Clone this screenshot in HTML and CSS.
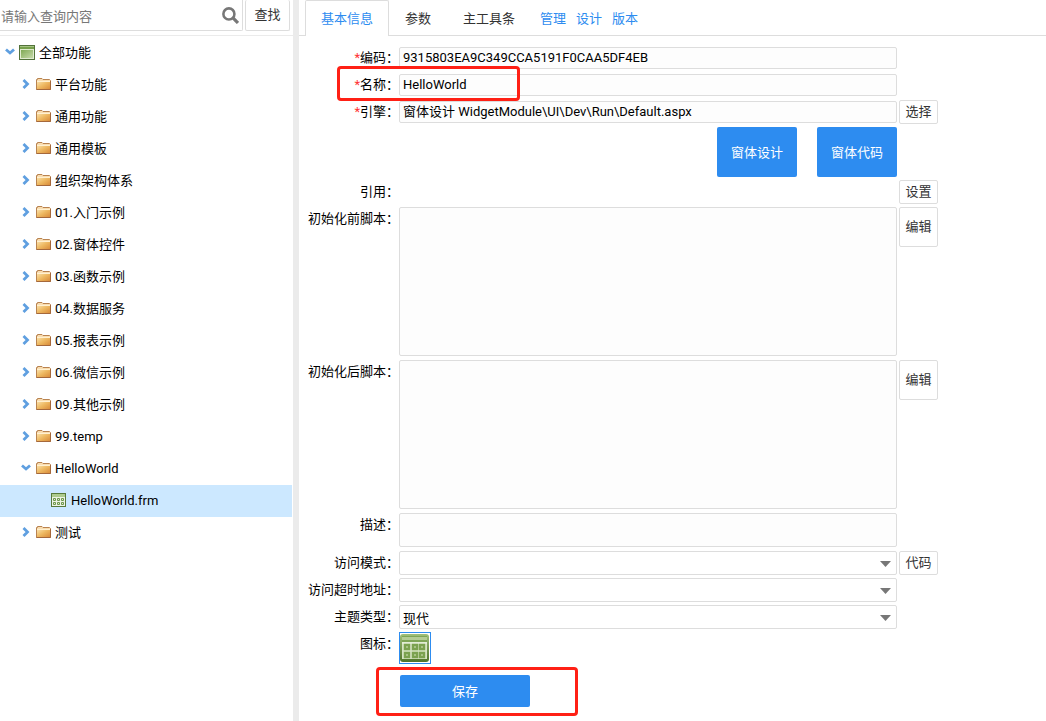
FILE: index.html
```html
<!DOCTYPE html>
<html lang="zh-CN">
<head>
<meta charset="utf-8">
<title>HelloWorld</title>
<link rel="stylesheet" href="styles.css">
</head>
<body>
<svg class="defs" aria-hidden="true">
  <defs>
    <linearGradient id="gFolder" x1="0" y1="0" x2="1" y2="1"><stop offset="0" stop-color="#fbe3ae"/><stop offset=".5" stop-color="#eeb962"/><stop offset="1" stop-color="#d98c3a"/></linearGradient>
    <linearGradient id="gGreen" x1="0" y1="0" x2="1" y2="1"><stop offset="0" stop-color="#80a955"/><stop offset="1" stop-color="#c6daa9"/></linearGradient>
    <linearGradient id="gGrid" x1="0" y1="0" x2="0" y2="1"><stop offset="0" stop-color="#9fbf7a"/><stop offset="1" stop-color="#4f7429"/></linearGradient>
    <symbol id="right" viewBox="0 0 8 10"><path d="M1.5 1 5.5 5 1.5 9" fill="none" stroke="#5f9fe0" stroke-width="2.8"/></symbol>
    <symbol id="down" viewBox="0 0 10 8"><path d="M1 1.5 5 5 9 1.5" fill="none" stroke="#5f9fe0" stroke-width="2.8"/></symbol>
    <symbol id="folder" viewBox="0 0 15 14"><path d="M.5 12.5V2.5H1.5V1.5H6L7 2.5H13.5L14.5 3.5V12.5Z" fill="#f9ddb0" stroke="#b98350"/><path d="M1 4H14V12H1Z" fill="url(#gFolder)"/><path d="M1 4.5H14" stroke="#fff0d0"/><path d="M.5 12.5H14.5V4" fill="none" stroke="#a5683b"/></symbol>
    <symbol id="window" viewBox="0 0 16 15"><rect x=".5" y=".5" width="15" height="14" fill="#e0ebcf" stroke="#52723a"/><path d="M1 1H15V4H1Z" fill="#76a04b"/><path d="M1 1.5H15" stroke="#a5c383"/><path d="M2 5H14V13H2Z" fill="url(#gGreen)"/></symbol>
    <symbol id="sheet" viewBox="0 0 15 14"><rect x=".5" y=".5" width="14" height="13" fill="#edf3e4" stroke="#587a3b"/><path d="M1 1H14V4H1Z" fill="#aecb8e"/><g fill="#dfead0" stroke="#6f974a"><path d="M2.5 5.5H4.5V7.5H2.5ZM6.5 5.5H8.5V7.5H6.5ZM10.5 5.5H12.5V7.5H10.5ZM2.5 9.5H4.5V11.5H2.5ZM6.5 9.5H8.5V11.5H6.5ZM10.5 9.5H12.5V11.5H10.5Z"/></g></symbol>
  </defs>
</svg>
<div class="app">
  <aside class="sidebar">
    <form class="search">
      <div class="search-box">
        <input type="text" placeholder="请输入查询内容" aria-label="查询内容">
        <svg class="magnifier" viewBox="0 0 16 16"><circle cx="6.5" cy="6.5" r="5.2" fill="none" stroke="#777" stroke-width="2.4"/><path d="M10.3 10.3 15 15" stroke="#777" stroke-width="3"/></svg>
      </div>
      <button type="button" class="plain find">查找</button>
    </form>
    <ul class="tree">
      <li><div class="node"><svg class="arrow"><use href="#down"/></svg><svg class="icon"><use href="#window"/></svg><span>全部功能</span></div>
        <ul>
          <li><div class="node"><svg class="arrow"><use href="#right"/></svg><svg class="icon"><use href="#folder"/></svg><span>平台功能</span></div></li>
          <li><div class="node"><svg class="arrow"><use href="#right"/></svg><svg class="icon"><use href="#folder"/></svg><span>通用功能</span></div></li>
          <li><div class="node"><svg class="arrow"><use href="#right"/></svg><svg class="icon"><use href="#folder"/></svg><span>通用模板</span></div></li>
          <li><div class="node"><svg class="arrow"><use href="#right"/></svg><svg class="icon"><use href="#folder"/></svg><span>组织架构体系</span></div></li>
          <li><div class="node"><svg class="arrow"><use href="#right"/></svg><svg class="icon"><use href="#folder"/></svg><span>01.入门示例</span></div></li>
          <li><div class="node"><svg class="arrow"><use href="#right"/></svg><svg class="icon"><use href="#folder"/></svg><span>02.窗体控件</span></div></li>
          <li><div class="node"><svg class="arrow"><use href="#right"/></svg><svg class="icon"><use href="#folder"/></svg><span>03.函数示例</span></div></li>
          <li><div class="node"><svg class="arrow"><use href="#right"/></svg><svg class="icon"><use href="#folder"/></svg><span>04.数据服务</span></div></li>
          <li><div class="node"><svg class="arrow"><use href="#right"/></svg><svg class="icon"><use href="#folder"/></svg><span>05.报表示例</span></div></li>
          <li><div class="node"><svg class="arrow"><use href="#right"/></svg><svg class="icon"><use href="#folder"/></svg><span>06.微信示例</span></div></li>
          <li><div class="node"><svg class="arrow"><use href="#right"/></svg><svg class="icon"><use href="#folder"/></svg><span>09.其他示例</span></div></li>
          <li><div class="node"><svg class="arrow"><use href="#right"/></svg><svg class="icon"><use href="#folder"/></svg><span>99.temp</span></div></li>
          <li><div class="node"><svg class="arrow"><use href="#down"/></svg><svg class="icon"><use href="#folder"/></svg><span>HelloWorld</span></div>
            <ul>
              <li><div class="node selected"><svg class="icon"><use href="#sheet"/></svg><span>HelloWorld.frm</span></div></li>
            </ul>
          </li>
          <li><div class="node"><svg class="arrow"><use href="#right"/></svg><svg class="icon"><use href="#folder"/></svg><span>测试</span></div></li>
        </ul>
      </li>
    </ul>
  </aside>
  <main class="main">
    <nav class="tabs">
      <button type="button" class="tab active">基本信息</button>
      <button type="button" class="tab">参数</button>
      <button type="button" class="tab">主工具条</button>
      <div class="links"><a href="#manage">管理</a><a href="#design">设计</a><a href="#version">版本</a></div>
    </nav>
    <form class="form">
      <div class="row">
        <label for="code"><b>*</b>编码：</label>
        <input id="code" class="field" type="text" value="9315803EA9C349CCA5191F0CAA5DF4EB">
      </div>
      <div class="row">
        <label for="name"><b>*</b>名称：</label>
        <input id="name" class="field" type="text" value="HelloWorld">
        <div class="mark mark-name"></div>
      </div>
      <div class="row">
        <label for="engine"><b>*</b>引擎：</label>
        <input id="engine" class="field" type="text" value="窗体设计 WidgetModule\UI\Dev\Run\Default.aspx">
        <button type="button" class="plain">选择</button>
      </div>
      <div class="row">
        <div class="actions">
          <button type="button" class="primary">窗体设计</button>
          <button type="button" class="primary">窗体代码</button>
        </div>
      </div>
      <div class="row">
        <span class="label">引用：</span>
        <span></span>
        <button type="button" class="plain">设置</button>
      </div>
      <div class="row">
        <label for="before">初始化前脚本：</label>
        <textarea id="before" class="field script"></textarea>
        <button type="button" class="plain tall">编辑</button>
      </div>
      <div class="row">
        <label for="after">初始化后脚本：</label>
        <textarea id="after" class="field script"></textarea>
        <button type="button" class="plain tall">编辑</button>
      </div>
      <div class="row">
        <label for="desc">描述：</label>
        <textarea id="desc" class="field desc"></textarea>
      </div>
      <div class="row">
        <label for="mode">访问模式：</label>
        <div class="select"><select id="mode" class="field"><option></option></select><svg viewBox="0 0 11 6"><path d="M0 0H11L5.5 6Z" fill="#777"/></svg></div>
        <button type="button" class="plain">代码</button>
      </div>
      <div class="row">
        <label for="timeout">访问超时地址：</label>
        <div class="select"><select id="timeout" class="field"><option></option></select><svg viewBox="0 0 11 6"><path d="M0 0H11L5.5 6Z" fill="#777"/></svg></div>
      </div>
      <div class="row">
        <label for="theme">主题类型：</label>
        <div class="select"><select id="theme" class="field"><option>现代</option></select><svg viewBox="0 0 11 6"><path d="M0 0H11L5.5 6Z" fill="#777"/></svg></div>
      </div>
      <div class="row">
        <span class="label">图标：</span>
        <button type="button" class="picker" aria-label="图标">
          <svg viewBox="0 0 30 30"><rect x="0" y="1" width="29" height="28" rx="3" fill="url(#gGrid)"/><rect x="2" y="3" width="25" height="6" fill="#7fa556"/><path d="M2 5.500H27" stroke="#b3cc95" stroke-width="3"/><path d="M2 9H27V26H2Z" fill="#d6e4c2"/><path d="M2 9H27V11H2Z" fill="#e3edd6"/><g fill="#c4d9a8" stroke="#7ba24f" stroke-width="2.400"><path d="M5 12H9V16H5ZM13 12H17V16H13ZM20 12H24V16H20ZM5 20H9V24H5ZM13 20H17V24H13ZM20 20H24V24H20Z"/></g></svg>
        </button>
      </div>
      <div class="row save-row">
        <button type="button" class="primary save">保存</button>
        <div class="mark mark-save"></div>
      </div>
    </form>
  </main>
</div>
</body>
</html>
```

FILE: styles.css
```css
* { box-sizing: border-box; }
body {
  margin: 0;
  background: #fff;
  color: #000;
  font: 13px/22px Roboto, "Noto Sans CJK SC", sans-serif;
}
button, input, select, textarea { font: inherit; color: inherit; }
button { cursor: pointer; }
ul { list-style: none; margin: 0; padding: 0; }
.defs { position: absolute; width: 0; height: 0; }
.app { display: flex; min-height: 100vh; }

.sidebar { flex: 0 0 299px; border-right: 6px solid #ebebeb; }
.search {
  display: flex;
  gap: 2px;
  height: 36px;
  padding-right: 3px;
  border-bottom: 1px solid #ebebeb;
}
.search-box {
  flex: 1;
  display: flex;
  align-items: center;
  height: 31px;
  padding-right: 3px;
  border: 1px solid #ddd;
  border-width: 0 1px 1px 0;
  border-radius: 0 0 2px 0;
}
.search-box input {
  flex: 1;
  min-width: 0;
  height: 30px;
  padding: 2px 0 0 1px;
  border: 0;
  outline: 0;
  background: none;
}
.search-box input::placeholder { color: #777; opacity: 1; }
.magnifier { width: 17px; height: 17px; }
.plain {
  align-self: start;
  height: 24px;
  padding: 0;
  border: 1px solid #ddd;
  border-radius: 2px;
  background: #fff;
  color: #333;
}
.plain.find { width: 45px; height: 31px; border-top: 0; }
.tall { height: 40px; }

.tree { padding: 1px 1px 0 0; }
.node { display: flex; align-items: center; height: 32px; padding-left: 5px; }
.node svg { margin-bottom: 2px; }
.node .arrow { width: 10px; height: 8px; margin-right: 4px; }
.node .icon { width: 16px; height: 15px; margin-right: 4px; }
.tree ul .node { padding-left: 21px; }
.tree ul .arrow { height: 10px; margin-right: 5px; }
.tree ul .icon { width: 15px; height: 14px; margin-right: 4px; }
.tree ul ul .node { padding-left: 51px; }
.tree ul ul .icon { margin-right: 5px; }
.selected { background: #cce8ff; }

.main { flex: 1; min-width: 0; }
.tabs {
  display: flex;
  align-items: stretch;
  height: 36px;
  padding-left: 6px;
  box-shadow: inset 0 -1px #ddd;
}
.tab {
  padding: 2px 16px 0;
  border: 0;
  background: none;
  color: #333;
}
.tab.active {
  padding: 1px 15px 0;
  border: 1px solid #ddd;
  border-bottom: 0;
  border-radius: 2px 2px 0 0;
  background: #fff;
  color: #2d8cf0;
}
.links { display: flex; align-items: center; gap: 10px; padding: 2px 9px 0; }
.links a { color: #2d8cf0; text-decoration: none; }

.form { display: grid; gap: 3px; padding: 10px 0; }
.row {
  position: relative;
  display: grid;
  grid-template-columns: 100px minmax(0, 498px) 41px;
  min-height: 24px;
}
.row label, .row .label { line-height: 24px; text-align: right; white-space: nowrap; }
.row label b { color: #f33; font-weight: 400; }
.row > .plain { margin-left: 2px; width: 39px; }
.field {
  display: block;
  width: 100%;
  height: 24px;
  padding: 0 3px;
  border: 1px solid #ddd;
  border-radius: 2px;
  outline: 0;
  background: #fdfdfd;
}
input.field { height: 22px; align-self: center; }
textarea.field { resize: none; }
.script { height: 149px; margin-bottom: 1px; }
.desc { height: 34px; margin-bottom: 1px; }
.select { position: relative; }
.select select { appearance: none; padding-top: 2px; background: #fff; }
.select svg { position: absolute; top: 10px; right: 6px; width: 11px; height: 6px; pointer-events: none; }
.actions { grid-column: 2; display: flex; justify-content: flex-end; gap: 20px; }
.primary {
  width: 80px;
  height: 50px;
  padding: 2px 0 0;
  border: 0;
  border-radius: 2px;
  background: #2d8cf0;
  color: #fff;
}
.picker {
  width: 32px;
  height: 32px;
  padding: 0;
  border: 1px solid #2d8cf0;
  background: #fff;
}
.picker svg { display: block; width: 30px; height: 30px; }
.save-row { margin-top: 8px; }
.save { grid-column: 2; width: 130px; height: 32px; margin-left: 1px; }
.mark { position: absolute; border: 3px solid #ff2015; border-radius: 4px; pointer-events: none; }
.mark-name { left: 38px; top: -7px; width: 183px; height: 35px; }
.mark-save { left: 77px; top: -8px; width: 202px; height: 49px; }
```
